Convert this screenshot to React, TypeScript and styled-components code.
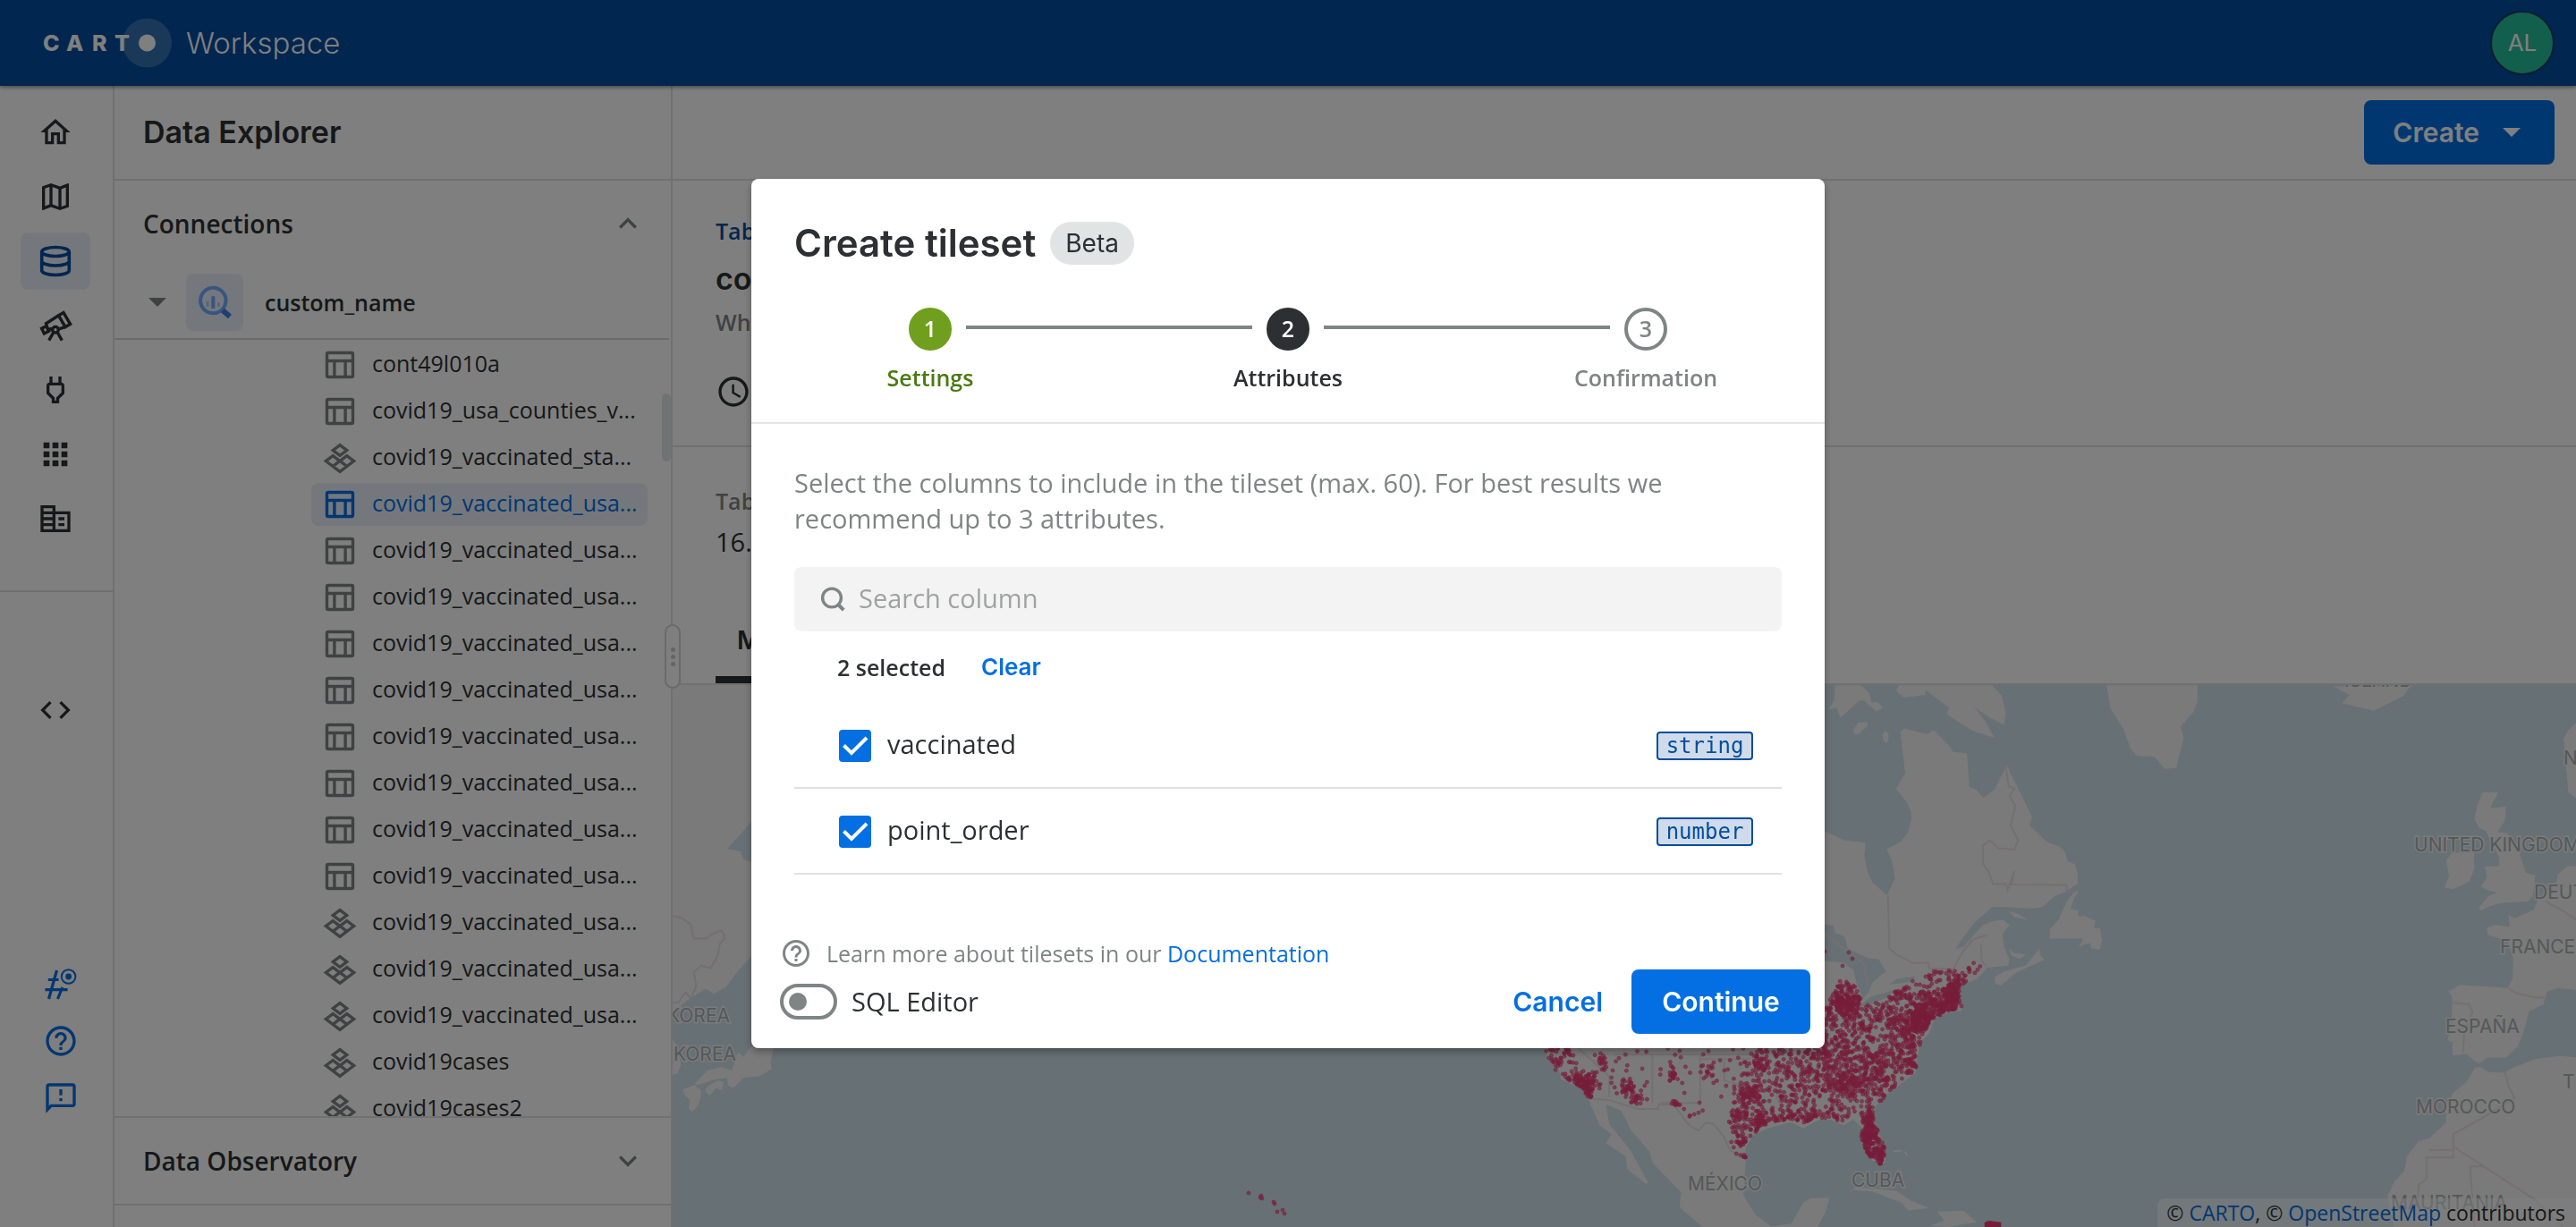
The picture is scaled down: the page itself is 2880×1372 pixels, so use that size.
import React from 'react';
import styled, { createGlobalStyle } from 'styled-components';

const body = `'Open Sans', 'Noto Sans', sans-serif`;
const display = `Inter, 'Open Sans', sans-serif`;

const color = {
  navy: '#024d9e',
  primary: '#036fe2',
  tint: '#e8f0fb',
  text: '#2c3032',
  muted: '#7f8484',
  line: '#e0e0e0',
  green: '#709f1d',
  greenDark: '#4a7a12',
};

const Global = createGlobalStyle`
  *, *::before, *::after { box-sizing: border-box; }
  body { margin: 0; font-family: ${body}; color: ${color.text}; background: #fff; }
  h1, h2, h3, p, ul, ol { margin: 0; padding: 0; }
  ul, ol { list-style: none; }
  button { border: 0; padding: 0; background: none; color: inherit; font: inherit; cursor: pointer; }
  a { text-decoration: none; }
`;

/* ---------- shell ---------- */

const Shell = styled.div`
  display: flex;
  flex-direction: column;
  height: 100vh;
  min-height: 1000px;
  overflow: hidden;
`;

const TopBar = styled.header`
  position: relative;
  z-index: 1;
  flex: none;
  display: flex;
  align-items: center;
  justify-content: space-between;
  height: 96px;
  padding: 0 24px 0 48px;
  background: ${color.navy};
  box-shadow: 0 2px 4px rgba(0, 0, 0, 0.4);
`;

const Brand = styled.div`
  display: flex;
  align-items: center;
  gap: 16px;
  color: #fff;
  font: 300 33px/40px ${display};
`;

const Avatar = styled.button`
  width: 72px;
  height: 72px;
  border: 2px solid #1b3a63;
  border-radius: 50%;
  background: #26bf9a;
  color: #fff;
  font: 400 26px/32px ${display};
`;

const Columns = styled.div`
  flex: 1;
  min-height: 0;
  display: flex;
`;

/* ---------- rail ---------- */

const Rail = styled.nav`
  flex: none;
  display: flex;
  flex-direction: column;
  width: 128px;
  border-right: 2px solid ${color.line};
`;

const RailGroup = styled.div<{ $gap?: number }>`
  display: flex;
  flex-direction: column;
  align-items: center;
  gap: ${(p) => p.$gap ?? 8}px;
`;

const RailTop = styled(RailGroup)`
  padding: 20px 2px 48px 0;
  border-bottom: 2px solid ${color.line};
`;

const RailMiddle = styled(RailGroup)`
  flex: 1;
  padding: 100px 2px 0 0;
`;

const RailBottom = styled(RailGroup)`
  padding: 0 0 112px 10px;
`;

const RailItem = styled.button<{ $active?: boolean; $blue?: boolean }>`
  display: grid;
  place-items: center;
  width: 78px;
  height: 64px;
  border-radius: 8px;
  background: ${(p) => (p.$active ? color.tint : 'transparent')};
  color: ${(p) => (p.$active ? color.navy : p.$blue ? color.primary : color.text)};
`;

/* ---------- explorer panel ---------- */

const Panel = styled.aside`
  position: relative;
  flex: none;
  display: flex;
  flex-direction: column;
  width: 624px;
  border-right: 2px solid ${color.line};
`;

const PanelTitle = styled.h1`
  flex: none;
  height: 106px;
  padding: 30px 32px;
  border-bottom: 2px solid ${color.line};
  font: 600 34px/44px ${display};
`;

const SectionHeader = styled.button`
  flex: none;
  display: flex;
  align-items: center;
  justify-content: space-between;
  height: 96px;
  padding: 0 28px 0 32px;
  font: 600 28px/40px ${body};
  color: ${color.text};
  svg { color: ${color.muted}; }
`;

const Observatory = styled.section`
  flex: none;
  display: flex;
  flex-direction: column;
  margin-bottom: 24px;
  border-top: 2px solid ${color.line};
  border-bottom: 2px solid ${color.line};
`;

const ConnectionRow = styled.button`
  flex: none;
  display: flex;
  align-items: center;
  height: 82px;
  margin-right: 2px;
  padding-left: 28px;
  border-bottom: 2px solid #d4d4d4;
  font: 600 25px/36px ${body};
  color: ${color.text};
  > svg { color: ${color.muted}; }
`;

const ConnectionTile = styled.span`
  display: grid;
  place-items: center;
  width: 64px;
  height: 64px;
  margin: 0 24px 0 12px;
  border-radius: 8px;
  background: ${color.tint};
`;

const TableList = styled.ul`
  flex: 1;
  min-height: 0;
  display: flex;
  flex-direction: column;
  gap: 4px;
  padding: 4px 26px 0 220px;
  overflow: hidden;
`;

const TableItem = styled.button<{ $active?: boolean }>`
  display: flex;
  align-items: center;
  gap: 16px;
  width: 100%;
  height: 48px;
  padding-left: 12px;
  border-radius: 8px;
  white-space: nowrap;
  font: 400 25px/36px ${body};
  background: ${(p) => (p.$active ? color.tint : 'transparent')};
  color: ${(p) => (p.$active ? color.primary : color.text)};
  svg { color: ${(p) => (p.$active ? color.primary : color.muted)}; }
`;

const TableName = styled.span`
  padding-bottom: 4px;
`;

const ScrollThumb = styled.div`
  position: absolute;
  top: 344px;
  right: 0;
  width: 10px;
  height: 76px;
  border-radius: 5px;
  background: #e1e6e6;
`;

const ResizeHandle = styled.div`
  position: absolute;
  z-index: 1;
  top: 602px;
  right: -11px;
  display: flex;
  flex-direction: column;
  align-items: center;
  justify-content: center;
  gap: 3px;
  width: 18px;
  height: 72px;
  border: 2px solid #d2d4d4;
  border-radius: 9px;
  background: #fff;
`;

const GripDot = styled.span`
  width: 5px;
  height: 5px;
  border-radius: 50%;
  background: #c8caca;
`;

/* ---------- main area ---------- */

const Main = styled.main`
  flex: 1;
  min-width: 0;
  display: flex;
  flex-direction: column;
`;

const ActionBar = styled.div`
  flex: none;
  display: flex;
  align-items: center;
  justify-content: flex-end;
  height: 106px;
  padding: 0 24px;
  border-bottom: 2px solid ${color.line};
`;

const Button = styled.button<{ $variant?: 'solid' | 'text' }>`
  display: inline-flex;
  align-items: center;
  justify-content: center;
  min-width: ${(p) => (p.$variant === 'text' ? 0 : 200)}px;
  height: 72px;
  padding: 0 ${(p) => (p.$variant === 'text' ? 16 : 28)}px;
  border-radius: 8px;
  font: 600 30px/40px ${display};
  background: ${(p) => (p.$variant === 'text' ? 'transparent' : color.primary)};
  color: ${(p) => (p.$variant === 'text' ? color.primary : '#fff')};
`;

const CreateButton = styled(Button)`
  gap: 16px;
  padding: 0 28px 0 32px;
`;

const Details = styled.section`
  flex: none;
  display: flex;
  flex-direction: column;
  align-items: flex-start;
  padding: 40px 48px;
  border-bottom: 2px solid ${color.line};
`;

const Crumb = styled.a`
  font: 600 25px/32px ${body};
  color: ${color.navy};
`;

const DetailTitle = styled.h2`
  margin: 18px 0 12px;
  font: 600 34px/40px ${display};
`;

const Caption = styled.p`
  font: 600 25px/32px ${body};
  color: ${color.muted};
`;

const Meta = styled.div`
  display: flex;
  margin-top: 42px;
`;

const Stats = styled.section`
  flex: none;
  padding: 44px 48px 42px;
`;

const StatValue = styled.p`
  margin-top: 10px;
  font: 400 29px/40px ${body};
`;

const TabBar = styled.div`
  flex: none;
  display: flex;
  padding: 0 48px;
  border-bottom: 2px solid ${color.line};
`;

const Tab = styled.button`
  height: 96px;
  padding: 8px 24px 0;
  border-bottom: 8px solid ${color.text};
  font: 600 28px/40px ${display};
`;

const MapFrame = styled.div`
  position: relative;
  flex: 1;
  min-height: 0;
  overflow: hidden;
  background: #cfe0e9;
`;

const MapSvg = styled.svg`
  display: block;
  width: 100%;
  height: 100%;
`;

const MapLabel = styled.text`
  font: 400 21px ${display};
  fill: #aab0b2;
  stroke: #f4f6f6;
  stroke-width: 3px;
  paint-order: stroke;
`;

const Attribution = styled.p`
  position: absolute;
  right: 0;
  bottom: 0;
  padding: 0 12px 0 10px;
  border-top-left-radius: 8px;
  background: rgba(255, 255, 255, 0.5);
  font: 400 23px/32px ${body};
  a { color: ${color.primary}; }
`;

/* ---------- dialog ---------- */

const Backdrop = styled.div`
  position: fixed;
  z-index: 10;
  inset: 0;
  display: flex;
  align-items: center;
  justify-content: center;
  background: rgba(0, 0, 0, 0.5);
`;

const Dialog = styled.section`
  width: 1200px;
  max-width: 100%;
  border-radius: 8px;
  background: #fff;
  box-shadow: 0 4px 8px rgba(0, 0, 0, 0.3);
`;

const DialogHead = styled.header`
  padding: 48px 0 34px;
  border-bottom: 2px solid #e5e5e5;
`;

const TitleRow = styled.div`
  display: flex;
  align-items: center;
  gap: 16px;
  padding: 0 48px;
`;

const DialogTitle = styled.h2`
  font: 600 42px/48px ${display};
`;

const Chip = styled.span`
  padding: 0 17px;
  border-radius: 24px;
  background: #e0e4e5;
  font: 400 28px/48px ${display};
`;

const Stepper = styled.ol`
  display: flex;
  margin-top: 48px;
`;

const Step = styled.li<{ $ink: string }>`
  flex: 1;
  display: flex;
  flex-direction: column;
  gap: 14px;
  color: ${(p) => p.$ink};
  text-align: center;
  font: 600 25px/32px ${body};
`;

const StepTrack = styled.div`
  display: flex;
  align-items: center;
  gap: 16px;
`;

const Connector = styled.span<{ $hidden?: boolean }>`
  flex: 1;
  height: 4px;
  margin-bottom: 4px;
  background: ${(p) => (p.$hidden ? 'transparent' : color.muted)};
`;

const StepDot = styled.span<{ $fill?: string }>`
  width: 48px;
  height: 48px;
  border: 4px solid ${(p) => p.$fill ?? color.muted};
  border-radius: 50%;
  line-height: 38px;
  background: ${(p) => p.$fill ?? '#fff'};
  color: ${(p) => (p.$fill ? '#fff' : color.muted)};
`;

const DialogBody = styled.div`
  padding: 46px 48px 70px;
`;

const Intro = styled.p`
  margin-bottom: 34px;
  font: 400 29px/40px ${body};
  color: ${color.muted};
`;

const SearchBox = styled.label`
  display: flex;
  align-items: center;
  gap: 12px;
  height: 72px;
  padding: 0 24px;
  border-radius: 8px;
  background: #f3f3f3;
  color: ${color.muted};
`;

const SearchInput = styled.input`
  flex: 1;
  min-width: 0;
  padding: 0 0 2px;
  border: 0;
  outline: 0;
  background: transparent;
  font: 400 29px/40px ${body};
  color: ${color.text};
  &::placeholder { color: #a0a2a2; opacity: 1; }
`;

const SelectionBar = styled.div`
  display: flex;
  align-items: center;
  gap: 40px;
  height: 80px;
  padding-left: 48px;
  font: 600 25px/32px ${body};
`;

const ClearButton = styled.button`
  font: 600 26px/32px ${display};
  color: ${color.primary};
`;

const ColumnRow = styled.li`
  display: flex;
  align-items: center;
  justify-content: space-between;
  height: 96px;
  padding: 2px 32px 0 50px;
  border-bottom: 2px solid ${color.line};
`;

const ColumnLabel = styled.label`
  display: flex;
  align-items: center;
  gap: 18px;
  font: 400 29px/36px ${body};
`;

const ColumnName = styled.span`
  padding-bottom: 4px;
`;

const CheckWrap = styled.span`
  display: grid;
  > * { grid-area: 1 / 1; }
  svg { color: #fff; pointer-events: none; }
`;

const Checkbox = styled.input`
  appearance: none;
  width: 36px;
  height: 36px;
  margin: 0;
  border: 4px solid ${color.muted};
  border-radius: 4px;
  &:checked { border-color: ${color.primary}; background: ${color.primary}; }
`;

const TypeTag = styled.code`
  width: 108px;
  border: 2px solid ${color.navy};
  border-radius: 4px;
  background: #cfdbea;
  color: ${color.navy};
  text-align: center;
  font: 400 24px/28px 'DejaVu Sans Mono', monospace;
`;

const DialogFoot = styled.footer`
  padding: 0 16px 16px 32px;
`;

const LearnMore = styled.p`
  display: flex;
  align-items: center;
  gap: 16px;
  color: ${color.muted};
  font: 400 25px/36px ${body};
  a { color: ${color.primary}; }
`;

const Actions = styled.div`
  display: flex;
  align-items: center;
  gap: 16px;
`;

const SwitchLabel = styled.label`
  display: flex;
  align-items: center;
  gap: 16px;
  margin-right: auto;
  font: 400 29px/40px ${body};
`;

const Switch = styled.input`
  appearance: none;
  display: flex;
  align-items: center;
  width: 64px;
  height: 40px;
  margin: 0;
  padding: 0 6px;
  border: 4px solid ${color.muted};
  border-radius: 20px;
  &::before {
    content: '';
    width: 20px;
    height: 20px;
    border-radius: 50%;
    background: ${color.muted};
  }
  &:checked { justify-content: flex-end; }
`;

/* ---------- icons ---------- */

const paths = {
  home: 'M12 5.69l5 4.5V18h-2v-6H9v6H7v-7.81l5-4.5M12 3L2 12h3v8h6v-6h2v6h6v-8h3L12 3z',
  map: 'M20.5 3l-.16.03L15 5.1 9 3 3.36 4.9c-.21.07-.36.25-.36.48V20.5c0 .28.22.5.5.5l.16-.03L9 18.9l6 2.1 5.64-1.9c.21-.07.36-.25.36-.48V3.5c0-.28-.22-.5-.5-.5zM10 5.47l4 1.4v11.66l-4-1.4V5.47zm-5 .99l3-1.01v11.7l-3 1.16V6.46zm14 11.08l-3 1.01V6.86l3-1.16v11.84z',
  plug: 'M16.01 7L16 3h-2v4h-4V3H8v4h-.01C7 6.99 6 7.99 6 8.99v5.49L9.5 18v3h5v-3l3.5-3.51v-5.5c0-1-1-2-1.99-1.99zM16 13.66l-3.5 3.51V19h-1v-1.83L8 13.65V9h8v4.66z',
  apps: 'M4 8h4V4H4v4zm6 12h4v-4h-4v4zm-6 0h4v-4H4v4zm0-6h4v-4H4v4zm6 0h4v-4h-4v4zm6-10v4h4V4h-4zm-6 4h4V4h-4v4zm6 6h4v-4h-4v4zm0 6h4v-4h-4v4z',
  company: 'M2 3h10v4h10v14H2zM4 5v2h6V5zM4 9v2h6V9zM4 13v2h6v-2zM4 17v2h6v-2zM12 9v10h8V9zM14 11h4v2h-4zM14 15h4v2h-4z',
  code: 'M9.4 16.6L4.8 12l4.6-4.6L8 6l-6 6 6 6 1.4-1.4zm5.2 0l4.6-4.6-4.6-4.6L16 6l6 6-6 6-1.4-1.4z',
  help: 'M11 18h2v-2h-2v2zm1-16C6.48 2 2 6.48 2 12s4.48 10 10 10 10-4.48 10-10S17.52 2 12 2zm0 18c-4.41 0-8-3.59-8-8s3.59-8 8-8 8 3.59 8 8-3.59 8-8 8zm0-14c-2.21 0-4 1.79-4 4h2c0-1.1.9-2 2-2s2 .9 2 2c0 2-3 1.75-3 5h2c0-2.25 3-2.5 3-5 0-2.21-1.79-4-4-4z',
  feedback: 'M20 2H4c-1.1 0-1.99.9-1.99 2L2 22l4-4h14c1.1 0 2-.9 2-2V4c0-1.1-.9-2-2-2zm0 14H5.17L4 17.17V4h16v12zm-9-4h2v2h-2zm0-6h2v4h-2z',
  clock: 'M11.99 2C6.47 2 2 6.48 2 12s4.47 10 9.99 10C17.52 22 22 17.52 22 12S17.52 2 11.99 2zM12 20c-4.42 0-8-3.58-8-8s3.58-8 8-8 8 3.58 8 8-3.58 8-8 8zm.5-13H11v6l5.25 3.15.75-1.23-4.5-2.67z',
  up: 'M12 8l-6 6 1.41 1.41L12 10.83l4.59 4.58L18 14z',
  down: 'M16.59 8.59L12 13.17 7.41 8.59 6 10l6 6 6-6z',
  caret: 'M6 9l6 6 6-6z',
};

const Icon = ({ name, size = 40 }: { name: keyof typeof paths; size?: number }) => (
  <svg width={size} height={size} viewBox="0 0 24 24" fill="currentColor" fillRule="evenodd" aria-hidden="true">
    <path d={paths[name]} />
  </svg>
);

const LineIcon = ({ width = 3, size = 40, children }: { width?: number; size?: number; children: React.ReactNode }) => (
  <svg width={size} height={size} viewBox={`0 0 ${size} ${size}`} fill="none" stroke="currentColor" strokeWidth={width} aria-hidden="true">
    {children}
  </svg>
);

const SearchIcon = () => (
  <LineIcon width={3.4} size={36}>
    <circle cx="18" cy="16.5" r="10.4" />
    <path d="M25.200 24l6 6.200" strokeWidth="4" />
  </LineIcon>
);

const DatabaseIcon = () => (
  <LineIcon width={3.6}>
    <ellipse cx="20" cy="9.5" rx="15.3" ry="5" />
    <path d="M4.7 9.5v21c0 2.8 6.800 5 15.300 5s15.300-2.200 15.300-5v-21M4.700 20c0 2.800 6.800 5 15.300 5s15.300-2.200 15.300-5" />
  </LineIcon>
);

const TelescopeIcon = () => (
  <LineIcon width={3.4}>
    <path d="M23.500 8.800l5.500-3.200 7.600 12.700-5.600 3.300zM23.500 8.800L9.500 17.800l2 6.700 4.500-1M31 21.600l-6.500 2M4.600 23.200l5-2.500 3 5.600-5.200 2.600z" />
    <circle cx="20" cy="24.700" r="3.300" />
    <path d="M17.600 28l-4.900 8.700M22.400 28l4.900 8.700" />
  </LineIcon>
);

const HashIcon = () => (
  <LineIcon width={3.2}>
    <path d="M15.500 5L6.500 37M21.800 24L16.500 37M5.800 15.500h11.700M2.400 26.700h25.200" />
    <circle cx="28.600" cy="12" r="7.800" strokeWidth="2" />
    <circle cx="28.600" cy="12" r="3.400" fill="currentColor" stroke="none" />
  </LineIcon>
);

const TableIcon = () => (
  <LineIcon width={3.4}>
    <rect x="5.500" y="6.500" width="29" height="27" rx="1.500" />
    <path d="M5 15.500h30M13.900 15.500v18M26.100 15.500v18" />
  </LineIcon>
);

const TilesetIcon = () => (
  <LineIcon width={3.4}>
    <path d="M20 5.600l7.700 5.900-7.700 5.900-7.700-5.900zM12.200 17.600L20 23.500l7.800-5.900 7.800 5.900L20 35.300 4.400 23.500zM12.200 29.400L20 23.500l7.800 5.900" />
  </LineIcon>
);

const QueryIcon = () => (
  <svg width="64" height="64" viewBox="0 0 64 64" fill="none" aria-hidden="true">
    <circle cx="30.300" cy="30" r="14.200" stroke="#73abff" strokeWidth="4" />
    <path d="M24 30.700v6M36.400 32v5" stroke="#aecbfa" strokeWidth="3" />
    <path d="M30.300 25.300v13.700" stroke="#73abff" strokeWidth="4" />
    <path d="M41 41l8 7" stroke="#3f7ce8" strokeWidth="6" />
  </svg>
);

const Logo = () => (
  <svg width="144" height="56" viewBox="0 0 144 56" aria-label="CARTO" role="img">
    <circle cx="116.500" cy="28" r="27.500" fill="#fff" fillOpacity="0.2" />
    <g fill="#fff" fontFamily="Inter, sans-serif" fontWeight="800" fontSize="25">
      <text x="0 26 55 80" y="37">CART</text>
    </g>
    <circle cx="116.500" cy="28" r="9.500" fill="#fff" />
  </svg>
);

const CheckMark = () => (
  <svg width="36" height="36" viewBox="0 0 36 36" fill="none" stroke="currentColor" strokeWidth="4" aria-hidden="true">
    <path d="M5.500 17.500l8.500 8.500L31 9" />
  </svg>
);

/* ---------- map ---------- */

type Point = [number, number];

const usOutline: Point[] = [
  [1727, 1172], [1733, 1188], [1743, 1203], [1756, 1211], [1770, 1217], [1776, 1228], [1800, 1228],
  [1831, 1240], [1854, 1240], [1871, 1235], [1889, 1256], [1899, 1262], [1907, 1254], [1916, 1256],
  [1928, 1272], [1935, 1287], [1953, 1296], [1951, 1280], [1957, 1272], [1973, 1258], [2003, 1252],
  [2016, 1257], [2035, 1250], [2051, 1251], [2060, 1257], [2074, 1248], [2084, 1257], [2080, 1272],
  [2091, 1297], [2103, 1302], [2108, 1287], [2097, 1257], [2094, 1245], [2107, 1227], [2123, 1210],
  [2142, 1197], [2143, 1177], [2150, 1160], [2158, 1140], [2177, 1132], [2194, 1127], [2190, 1107],
  [2206, 1092], [2218, 1083], [2213, 1066], [2193, 1078], [2185, 1085], [2153, 1085], [2134, 1100],
  [2107, 1115], [2083, 1126], [2080, 1108], [2070, 1094], [2056, 1097], [2040, 1130], [2030, 1172],
];

const inside = (x: number, y: number, shape: Point[]) => {
  let hit = false;
  for (let i = 0, j = shape.length - 1; i < shape.length; j = i++) {
    const [xi, yi] = shape[i];
    const [xj, yj] = shape[j];
    if (yi > y !== yj > y && x < ((xj - xi) * (y - yi)) / (yj - yi) + xi) hit = !hit;
  }
  return hit;
};

/* centre x, centre y, spread x, spread y, number of points */
const clusters: number[][] = [
  [1735, 1180, 8, 9, 40], [1754, 1184, 5, 9, 30], [1770, 1211, 9, 6, 110], [1775, 1223, 3, 5, 40],
  [1792, 1188, 4, 4, 16], [1820, 1217, 4, 6, 36], [1830, 1231, 3, 4, 16], [1869, 1200, 3, 5, 20],
  [1871, 1235, 3, 3, 14], [1908, 1200, 4, 7, 14], [1955, 1224, 8, 8, 90], [1946, 1252, 6, 8, 50],
  [1968, 1255, 5, 6, 60], [1948, 1276, 5, 4, 26], [1944, 1293, 5, 2, 18], [1965, 1190, 9, 8, 40],
  [2066, 1213, 10, 9, 100], [2045, 1187, 12, 12, 60], [2098, 1196, 20, 12, 160], [2060, 1112, 9, 10, 90],
  [2066, 1122, 9, 7, 80], [2094, 1135, 20, 12, 80], [2135, 1145, 14, 10, 100], [2150, 1138, 9, 8, 200],
  [2183, 1112, 5, 9, 160], [2168, 1122, 12, 8, 120], [2125, 1113, 14, 7, 50], [2130, 1165, 12, 12, 80],
  [2140, 1190, 6, 9, 40], [2088, 1265, 6, 11, 110], [2090, 1280, 5, 10, 80], [2104, 1292, 4, 10, 90],
  [2095, 1250, 5, 6, 40], [2035, 1247, 16, 5, 50], [2010, 1252, 16, 3, 50], [2060, 1150, 20, 18, 120],
  [2108, 1222, 12, 10, 40], [2165, 1088, 8, 5, 20], [2195, 1090, 10, 7, 24], [2020, 1190, 30, 25, 140],
  [2010, 1220, 30, 20, 80], [1985, 1180, 20, 12, 30], [2075, 1180, 30, 30, 110],
];

const scatterCases = (): Point[] => {
  let seed = 19;
  const random = () => {
    seed = (seed * 16807) % 2147483647;
    return seed / 2147483647;
  };
  const points: Point[] = [];
  const add = (x: number, y: number) => {
    if (inside(x, y, usOutline)) points.push([Math.round(x * 10) / 10, Math.round(y * 10) / 10]);
  };
  clusters.forEach(([cx, cy, sx, sy, count]) => {
    for (let i = 0; i < count; i++) {
      const gx = random() + random() + random() - 1.5;
      const gy = random() + random() + random() - 1.5;
      add(cx + gx * sx * 2, cy + gy * sy * 2);
    }
  });
  for (let i = 0; i < 120; i++) add(1730 + random() * 230, 1172 + random() * 110);
  for (let i = 0; i < 620; i++) add(1960 + random() * 240, 1080 + random() * 175);
  return points;
};

const cases: Point[] = [
  ...scatterCases(),
  [1396, 1334], [1409, 1339], [1411, 1340], [1410, 1337], [1424, 1344], [1425, 1346], [1428, 1355],
  [1434, 1353], [1436, 1357], [2040, 1064], [2067, 1065], [2071, 1072], [2060, 1080],
];

const labels: [number, number, string][] = [
  [2699, 952, 'UNITED KINGDOM'], [2866, 855, 'NORGE'], [2833, 1005, 'DEUTSCHLAND'], [2795, 1066, 'FRANCE'],
  [2734, 1155, 'ESPAÑA'], [2701, 1245, 'MOROCCO'], [2865, 1217, 'TUNISIA'], [2070, 1327, 'CUBA'],
  [1887, 1331, 'MÉXICO'], [2673, 1352, 'MAURITANIA'], [2621, 768, 'ISLAND'],
];

const atlantic = [
  'M0 470L40 495L85 502L83 540L90 585L100 612L130 648L147 600L140 550L129 520L158 500L173 475L181 440L180 415L170 387L149 352L168 310L158 195L167 185L213 201L228 190L260 233L268 250L297 254L302 347L316 355L331 377L354 355L380 288L433 430L427 454L464 500L490 512L500 525L508 554L523 562L528 590L528 615L500 640L480 650L455 680L430 685L385 681L350 680L340 692L315 720L300 745L272 797L290 790L330 730L350 720L372 716L386 730L371 755L375 795L385 822L383 843L340 848L318 880L290 895L278 905L280 935L290 955L285 968L255 975L230 990L218 1030L200 1055L192 1110L190 1140L130 1200L105 1235L100 1255L110 1300L126 1345L126 1390L100 1385L75 1330L82 1298L60 1270L38 1285L0 1265Z',
  'M355 875L372 860L420 842L448 795L450 815L459 826L400 862L368 898L356 893Z',
  'M386 693L400 697L425 717L395 708Z',
  'M385 795L395 808L420 812L408 824L390 815Z',
  'M531 634L520 658L513 685L530 690L527 705L543 705L565 718L562 740L574 738L579 770L574 799L556 795L555 780L540 785L530 792L540 768L470 768L470 742L490 712L505 665L520 640Z',
  'M155 65L149 80L165 99L210 92L210 78L260 128L255 145L277 165L310 192L354 210L335 165L312 125L345 155L374 175L378 145L370 95L350 65Z',
  'M22 65L20 108L7 133L25 128L33 155L72 108L82 108L108 138L121 128L112 112L98 112L92 85L75 65Z',
  'M60 190L70 168L90 168L88 180L70 201L62 200Z',
  'M120 205L125 193L133 197L133 222L125 224Z',
  'M588 65L597 130L625 190L638 240L652 261L688 263L710 297L734 294L749 212L743 180L770 138L778 110L778 65Z',
  'M1062 68L1095 92L1080 115L1146 136L1208 95L1222 68Z',
  'M1568 170L1552 190L1542 212L1552 362L1568 378Z',
  'M1373 362L1406 362L1389 405L1422 402L1420 440L1404 472L1424 475L1440 500L1450 530L1463 585L1483 592L1478 650L1468 664L1407 670L1385 680L1370 690L1364 685L1385 650L1405 640L1380 632L1370 622L1382 600L1378 568L1408 567L1407 540L1380 470L1365 460L1356 435L1362 400Z',
  'M1310 530L1355 530L1356 575L1345 610L1312 631L1293 626L1303 595L1297 550Z',
  'M1568 567L1550 567L1530 590L1528 610L1490 655L1480 688L1440 712L1427 702L1430 735L1400 730L1382 738L1384 758L1425 775L1437 820L1436 880L1425 905L1325 896L1302 914L1310 930L1308 1010L1300 1050L1310 1055L1310 1092L1340 1088L1350 1100L1365 1115L1384 1098L1422 1098L1447 1067L1458 1030L1470 970L1500 950L1508 915L1530 905L1568 910Z',
  'M1568 1098L1535 1093L1482 1102L1430 1130L1420 1140L1385 1138L1370 1125L1358 1125L1340 1165L1312 1195L1297 1235L1297 1278L1262 1322L1240 1330L1215 1372L1210 1412L1190 1440L1175 1480L1187 1568L1568 1568Z',
  'M45 1472L65 1458L110 1462L150 1468L180 1495L218 1515L175 1522L160 1500L100 1470L60 1465Z',
  'M235 1525L290 1523L318 1555L290 1560L260 1568L220 1565L250 1550Z',
  'M142 1356L160 1354L160 1358L143 1360ZM163 1354L173 1364L171 1374L168 1364ZM155 1398L163 1425L160 1430Z',
].join('');

const pacific = [
  'M606 500L620 560L640 590L645 620L690 655L702 690L725 775L750 805L738 835L780 880L782 920L822 972L826 965L805 905L790 860L745 770L738 705L770 725L790 790L830 865L835 900L895 1000L892 1050L940 1116L1085 1116L1050 1075L1025 1010L1030 900L1030 850L1045 810L1075 785L1125 765L1150 785L1185 755L1215 755L1235 775L1262 748L1300 700L1300 500Z',
  'M1075 1116L1125 1105L1150 1035L1165 1020L1204 1018L1198 1060L1180 1116Z',
].join('');

const lakes = [
  'M0 728L18 732L22 752L42 762L48 795L90 822L112 825L129 860L118 868L100 890L92 915L80 935L66 890L60 855L40 835L0 830Z',
  'M72 955L95 930L150 908L130 930L90 955Z',
  'M134 896L150 880L190 872L180 887Z',
].join('');

const borders = [
  'M378 290L384 345L396 352L386 372L398 400L388 455L404 495L396 521L362 517L345 495L330 510L330 560L342 582L352 617L378 616L382 632L396 580L390 618L505 619L506 640',
  'M132 648L135 795L150 812L185 836L215 834L218 850L268 853L290 800L310 770L340 758M326 785L328 830L338 846M0 755L60 815L82 840L90 900',
  'M1427 905L1440 918L1480 930L1508 932M1310 945L1345 950L1352 970L1335 1025L1332 1085',
  'M1420 1140L1428 1180L1440 1210L1380 1260L1312 1310L1312 1375L1256 1375L1256 1435L1240 1450L1238 1490M1312 1345L1480 1490L1540 1568M1378 1400L1347 1400L1356 1568M1262 1355L1312 1353M1505 665L1540 690L1568 715',
].join('');

const stateLines =
  'M702 685L745 690L805 720L848 720L848 706L880 706L912 775L932 792L947 766L963 770L985 815L998 860L1033 888M680 515L745 610L745 680M755 537L1050 537M835 537V700M935 537V700H850M935 553H1040M985 560V625L1040 650M1095 580V680L1110 740M1190 500L1180 600';

const CaseMap = () => (
  <MapSvg viewBox="752 766 2128 606" preserveAspectRatio="xMidYMid slice" role="img" aria-label="Map">
    <g fill="#f5f5f4">
      <g transform="translate(2040 740) scale(0.5357 0.4031)">
        <path d={atlantic} />
        <path d={lakes} fill="#cfe0e9" />
        <path d={borders} fill="none" stroke="#e9dfe0" strokeWidth="2" vectorEffect="non-scaling-stroke" />
      </g>
      <g transform="translate(1400 1000) scale(0.5357 0.3333)">
        <path d={pacific} />
        <path d={stateLines} fill="none" stroke="#e9dfe0" strokeWidth="2" vectorEffect="non-scaling-stroke" />
      </g>
      <g transform="translate(740 660) scale(0.4464 0.338)">
        <path d="M24 313H224V767L165 855L197 863L203 890L224 898V1210L190 1260L160 1313L130 1335L110 1318L70 1350L24 1400Z" />
        <path d="M24 1075L50 1085L72 1105L80 1152L112 1152L125 1138L150 1125L158 1150L145 1170L138 1215L122 1250L98 1242L80 1262L86 1310L72 1350L60 1330L40 1365L24 1365" fill="none" stroke="#e9dcde" strokeWidth="2" vectorEffect="non-scaling-stroke" />
        <path d="M165 855L224 767V898L203 890L197 863Z" fill="#cfe0e9" />
      </g>
      <g transform="translate(740 1100) scale(0.4464 0.3333)">
        <path d="M224 210L280 210L272 265L275 285L245 310L205 315L178 351L165 340L163 315L130 322L90 340L82 335L115 290L150 280L175 290L190 230L205 245ZM82 340L100 360L92 405L76 430L67 420L70 390L58 375L52 355ZM110 350L125 335L140 325L155 330L150 358L135 350L120 375L110 365ZM24 180L38 210L48 270L40 300L24 306Z" />
      </g>
    </g>
    <g fill="#ec3a75" fillOpacity="0.6" stroke="#ec3a75" strokeOpacity="0.6">
      {cases.map(([x, y], i) => (
        <circle key={i} cx={x} cy={y} r="2" />
      ))}
      <path d="M2219 1367q4-3 10-1l8 1v5h-18z" fillOpacity="1" />
    </g>
    {labels.map(([x, y, name]) => (
      <MapLabel key={name} x={x} y={y}>{name}</MapLabel>
    ))}
    <MapLabel x={816} y={1143} textAnchor="end">KOREA</MapLabel>
    <MapLabel x={823} y={1186} textAnchor="end">KOREA</MapLabel>
  </MapSvg>
);

/* ---------- data ---------- */

type Dataset = { name: string; kind: 'table' | 'tileset'; active?: boolean };

const usa = 'covid19_vaccinated_usa...';
const datasets: Dataset[] = [
  { name: 'cont49l010a', kind: 'table' },
  { name: 'covid19_usa_counties_v...', kind: 'table' },
  { name: 'covid19_vaccinated_sta...', kind: 'tileset' },
  { name: usa, kind: 'table', active: true },
  ...Array.from({ length: 8 }, (): Dataset => ({ name: usa, kind: 'table' })),
  ...Array.from({ length: 3 }, (): Dataset => ({ name: usa, kind: 'tileset' })),
  { name: 'covid19cases', kind: 'tileset' },
  { name: 'covid19cases2', kind: 'tileset' },
];

const columns = [
  { name: 'vaccinated', type: 'string' },
  { name: 'point_order', type: 'number' },
];

export default function App() {
  return (
    <>
      <Global />
      <Shell>
        <TopBar>
          <Brand>
            <Logo />
            Workspace
          </Brand>
          <Avatar>AL</Avatar>
        </TopBar>
        <Columns>
          <Rail>
            <RailTop>
              <RailItem aria-label="Home"><Icon name="home" /></RailItem>
              <RailItem aria-label="Maps"><Icon name="map" /></RailItem>
              <RailItem aria-label="Data Explorer" $active><DatabaseIcon /></RailItem>
              <RailItem aria-label="Data Observatory"><TelescopeIcon /></RailItem>
              <RailItem aria-label="Connections"><Icon name="plug" /></RailItem>
              <RailItem aria-label="Applications"><Icon name="apps" /></RailItem>
              <RailItem aria-label="Organization"><Icon name="company" /></RailItem>
            </RailTop>
            <RailMiddle>
              <RailItem aria-label="Developers"><Icon name="code" /></RailItem>
            </RailMiddle>
            <RailBottom $gap={0}>
              <RailItem aria-label="Slack" $blue><HashIcon /></RailItem>
              <RailItem aria-label="Help" $blue><Icon name="help" /></RailItem>
              <RailItem aria-label="Feedback" $blue><Icon name="feedback" /></RailItem>
            </RailBottom>
          </Rail>

          <Panel>
            <PanelTitle>Data Explorer</PanelTitle>
            <SectionHeader>
              Connections
              <Icon name="up" />
            </SectionHeader>
            <ConnectionRow>
              <Icon name="caret" />
              <ConnectionTile><QueryIcon /></ConnectionTile>
              custom_name
            </ConnectionRow>
            <TableList>
              {datasets.map((d, i) => (
                <li key={i}>
                  <TableItem $active={d.active}>
                    {d.kind === 'table' ? <TableIcon /> : <TilesetIcon />}
                    <TableName>{d.name}</TableName>
                  </TableItem>
                </li>
              ))}
            </TableList>
            <Observatory>
              <SectionHeader>
                Data Observatory
                <Icon name="down" />
              </SectionHeader>
            </Observatory>
            <ScrollThumb />
            <ResizeHandle>
              <GripDot />
              <GripDot />
              <GripDot />
            </ResizeHandle>
          </Panel>

          <Main>
            <ActionBar>
              <CreateButton>
                Create
                <Icon name="caret" />
              </CreateButton>
            </ActionBar>
            <Details>
              <Crumb href="#tables">Table</Crumb>
              <DetailTitle>covid19</DetailTitle>
              <Caption>When</Caption>
              <Meta><Icon name="clock" /></Meta>
            </Details>
            <Stats>
              <Caption>Table</Caption>
              <StatValue>16.8</StatValue>
            </Stats>
            <TabBar>
              <Tab>Map</Tab>
            </TabBar>
            <MapFrame>
              <CaseMap />
              <Attribution>
                © <a href="#carto">CARTO</a>, © <a href="#osm">OpenStreetMap</a> contributors
              </Attribution>
            </MapFrame>
          </Main>
        </Columns>
      </Shell>

      <Backdrop>
        <Dialog role="dialog" aria-labelledby="dialog-title">
          <DialogHead>
            <TitleRow>
              <DialogTitle id="dialog-title">Create tileset</DialogTitle>
              <Chip>Beta</Chip>
            </TitleRow>
            <Stepper>
              <Step $ink={color.greenDark}>
                <StepTrack>
                  <Connector $hidden />
                  <StepDot $fill={color.green}>1</StepDot>
                  <Connector />
                </StepTrack>
                Settings
              </Step>
              <Step $ink={color.text}>
                <StepTrack>
                  <Connector />
                  <StepDot $fill={color.text}>2</StepDot>
                  <Connector />
                </StepTrack>
                Attributes
              </Step>
              <Step $ink={color.muted}>
                <StepTrack>
                  <Connector />
                  <StepDot>3</StepDot>
                  <Connector $hidden />
                </StepTrack>
                Confirmation
              </Step>
            </Stepper>
          </DialogHead>
          <DialogBody>
            <Intro>
              Select the columns to include in the tileset (max. 60). For best results we
              recommend up to 3 attributes.
            </Intro>
            <SearchBox>
              <SearchIcon />
              <SearchInput type="text" placeholder="Search column" aria-label="Search column" />
            </SearchBox>
            <SelectionBar>
              2 selected
              <ClearButton>Clear</ClearButton>
            </SelectionBar>
            <ul>
              {columns.map((c) => (
                <ColumnRow key={c.name}>
                  <ColumnLabel>
                    <CheckWrap>
                      <Checkbox type="checkbox" defaultChecked />
                      <CheckMark />
                    </CheckWrap>
                    <ColumnName>{c.name}</ColumnName>
                  </ColumnLabel>
                  <TypeTag>{c.type}</TypeTag>
                </ColumnRow>
              ))}
            </ul>
          </DialogBody>
          <DialogFoot>
            <LearnMore>
              <Icon name="help" size={36} />
              <span>
                Learn more about tilesets in our <a href="#docs">Documentation</a>
              </span>
            </LearnMore>
            <Actions>
              <SwitchLabel>
                <Switch type="checkbox" />
                SQL Editor
              </SwitchLabel>
              <Button $variant="text">Cancel</Button>
              <Button>Continue</Button>
            </Actions>
          </DialogFoot>
        </Dialog>
      </Backdrop>
    </>
  );
}
